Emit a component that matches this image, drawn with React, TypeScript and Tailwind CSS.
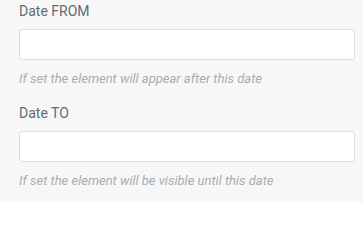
const fields = [
  { label: "Date FROM", help: "If set the element will appear after this date" },
  { label: "Date TO", help: "If set the element will be visible until this date" },
];

export default function App() {
  return (
    <div className="h-[202px] w-[363px] overflow-hidden bg-[#f7f7f7] pl-[19px] pt-[2px] font-['Roboto',sans-serif]">
      <div className="flex w-[336px] flex-col gap-[17px]">
        {fields.map((field) => (
          <div key={field.label} className="flex flex-col">
            <label className="text-[14px] leading-[18px] text-[#666b70]">
              {field.label}
            </label>
            <input
              type="text"
              className="mt-[9px] h-[31px] w-full rounded-[3px] border border-[#dcdfe2] bg-white px-2 text-[13px] outline-none"
            />
            <p className="mt-[10px] text-[13px] leading-[17px] text-[#a9adb2] italic">
              {field.help}
            </p>
          </div>
        ))}
      </div>
    </div>
  );
}
